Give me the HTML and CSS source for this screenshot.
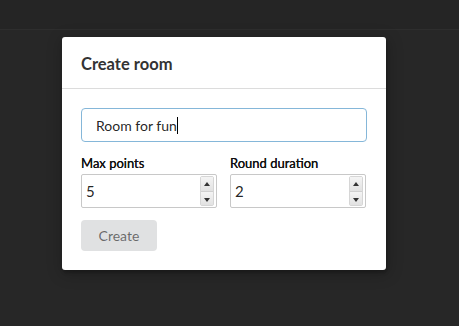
FILE: index.html
```html
<!DOCTYPE html>
<html lang="en">
<head>
    <meta charset="utf-8">
    <title>Create room</title>
    <link rel="stylesheet" href="styles.css">
</head>
<body>
    <div class="topbar"></div>
    <div class="dimmer">
        <div class="modal">
            <div class="modal-header">Create room</div>
            <div class="modal-content">
                <div class="text-field">
                    <span class="value">Room for fun</span><span class="caret"></span>
                </div>
                <div class="fields">
                    <div class="field">
                        <label>Max points</label>
                        <div class="number-input">
                            <span class="value">5</span>
                            <span class="spinner">
                                <span class="spin up"></span>
                                <span class="spin down"></span>
                            </span>
                        </div>
                    </div>
                    <div class="field">
                        <label>Round duration</label>
                        <div class="number-input">
                            <span class="value">2</span>
                            <span class="spinner">
                                <span class="spin up"></span>
                                <span class="spin down"></span>
                            </span>
                        </div>
                    </div>
                </div>
                <button class="btn" disabled>Create</button>
            </div>
        </div>
    </div>
</body>
</html>
```

FILE: styles.css
```css
html, body {
    margin: 0;
    padding: 0;
}
body {
    background-color: #272727;
    font-family: Lato, "Open Sans", sans-serif;
    color: rgba(0, 0, 0, 0.87);
    height: 326px;
    overflow: hidden;
}
.topbar {
    height: 29px;
    background-color: #252525;
    border-bottom: 1px solid #2e2e2e;
}
.dimmer {
    padding-top: 7px;
    padding-left: 62px;
}
.modal {
    width: 324px;
    background: #fff;
    border-radius: 3px;
    box-shadow: 1px 3px 3px 0 rgba(0, 0, 0, 0.2), 1px 3px 15px 2px rgba(0, 0, 0, 0.2);
}
.modal-header {
    height: 52px;
    box-sizing: border-box;
    padding: 17px 19px 0;
    font-size: 16.5px;
    font-weight: 700;
    line-height: 20px;
    color: #333;
    border-bottom: 1px solid #dcdcdc;
}
.modal-content {
    padding: 19px 19px 19px;
}
.text-field {
    display: flex;
    align-items: center;
    height: 34px;
    box-sizing: border-box;
    border: 1px solid #85b7d9;
    border-radius: 4px;
    padding: 0 14px;
    font-size: 14px;
}
.caret {
    display: inline-block;
    width: 1px;
    height: 17px;
    background: #000;
}
.fields {
    display: flex;
    gap: 13px;
    margin-top: 13px;
}
.field {
    width: 136px;
}
.field label {
    display: block;
    font-size: 13px;
    font-weight: 400;
    line-height: 16px;
    height: 19px;
    color: #111;
    text-shadow: 0 0 0.3px #111;
}
.number-input {
    display: flex;
    align-items: center;
    justify-content: space-between;
    height: 34px;
    box-sizing: border-box;
    border: 1px solid #c8c8c8;
    border-radius: 2px;
    padding: 0 2px 0 4px;
    font-size: 15px;
}
.spinner {
    display: flex;
    flex-direction: column;
    width: 14px;
    height: 30px;
    border: 1px solid #d6d6d6;
    border-radius: 2px;
    box-sizing: border-box;
}
.spin {
    flex: 1;
    position: relative;
    background: linear-gradient(#f4f4f4, #e2e2e2);
}
.spin.up {
    border-bottom: 1px solid #d0d0d0;
}
.spin::after {
    content: "";
    position: absolute;
    left: 3px;
    top: 5px;
    border-left: 3.5px solid transparent;
    border-right: 3.5px solid transparent;
}
.spin.up::after {
    border-bottom: 4px solid #333;
}
.spin.down::after {
    top: 6px;
    border-top: 4px solid #333;
}
.btn {
    display: block;
    margin-top: 12px;
    width: 76px;
    height: 31px;
    border: none;
    border-radius: 4px;
    background: #e0e1e2;
    color: rgba(0, 0, 0, 0.55);
    font-family: Lato, sans-serif;
    font-size: 14px;
    font-weight: 400;
    padding: 0;
}
```
